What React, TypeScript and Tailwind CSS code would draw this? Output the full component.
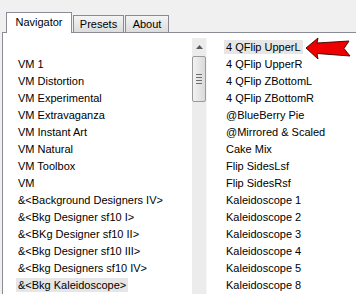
const leftItems = [
  'VM 1',
  'VM Distortion',
  'VM Experimental',
  'VM Extravaganza',
  'VM Instant Art',
  'VM Natural',
  'VM Toolbox',
  'VM',
  '&<Background Designers IV>',
  '&<Bkg Designer sf10 I>',
  '&<BKg Designer sf10 II>',
  '&<Bkg Designer sf10 III>',
  '&<Bkg Designers sf10 IV>',
  '&<Bkg Kaleidoscope>',
]

const rightItems = [
  '4 QFlip UpperL',
  '4 QFlip UpperR',
  '4 QFlip ZBottomL',
  '4 QFlip ZBottomR',
  '@BlueBerry Pie',
  '@Mirrored & Scaled',
  'Cake Mix',
  'Flip SidesLsf',
  'Flip SidesRsf',
  'Kaleidoscope 1',
  'Kaleidoscope 2',
  'Kaleidoscope 3',
  'Kaleidoscope 4',
  'Kaleidoscope 5',
  'Kaleidoscope 8',
]

function Row({ text, selected }: { text: string; selected?: boolean }) {
  return (
    <div className="h-[17px] leading-[17px] whitespace-nowrap">
      <span className={selected ? 'px-[2px] py-[1px] bg-[#e6e6e6]' : 'px-[2px]'}>{text}</span>
    </div>
  )
}

function RedArrow() {
  return (
    <svg className="absolute left-[304px] top-[37px]" width="48" height="23" viewBox="0 0 48 23">
      <polygon
        points="2,11 14,1 13,6 45,4 40,11.5 46,19 13,16.5 14,22"
        fill="#ee0000"
        stroke="#3a0000"
        strokeWidth="0.9"
        strokeLinejoin="round"
      />
    </svg>
  )
}

export default function App() {
  return (
    <div
      className="relative w-[356px] h-[294px] overflow-hidden bg-[#f0f0f0] text-[11px] text-black"
      style={{ fontFamily: '"Liberation Sans", Arial, sans-serif' }}
    >
      <div className="pt-[12px] pl-[2px] flex flex-col h-full">
        {/* tabs */}
        <div className="flex items-end pl-[4px] h-[20px]">
          <div className="relative z-10 -mb-px w-[66px] h-[21px] bg-white border border-b-0 border-[#898c95] flex items-center justify-center pb-[1px]">
            Navigator
          </div>
          <div className="w-[51px] h-[17px] ml-px border border-b-0 border-[#898c95] bg-gradient-to-b from-[#f4f4f4] to-[#dcdcdc] flex items-center justify-center">
            Presets
          </div>
          <div className="w-[44px] h-[17px] ml-px border border-b-0 border-[#898c95] bg-gradient-to-b from-[#f4f4f4] to-[#dcdcdc] flex items-center justify-center">
            About
          </div>
        </div>

        {/* panel */}
        <div className="flex-1 flex bg-white border-l border-t border-[#898c95]">
          <div className="w-[189px] pt-[23px] pl-[13px]">
            {leftItems.map((t, i) => (
              <Row key={i} text={t} selected={i === leftItems.length - 1} />
            ))}
          </div>

          <div className="w-[15px] mt-[5px] bg-[#ececec] border-r border-[#f7f7f7] flex flex-col items-center">
            <div className="h-[18px] w-full flex items-center justify-center">
              <svg width="7" height="4" viewBox="0 0 7 4">
                <polygon points="0,4 3.5,0 7,4" fill="#5a5a5a" />
              </svg>
            </div>
            <div className="w-[14px] h-[46px] border border-[#9a9a9a] rounded-[2px] bg-gradient-to-r from-[#f2f2f2] to-[#dadada] flex flex-col items-center justify-center gap-[2px]">
              <div className="w-[6px] h-px bg-[#6e6e6e]" />
              <div className="w-[6px] h-px bg-[#6e6e6e]" />
              <div className="w-[6px] h-px bg-[#6e6e6e]" />
              <div className="w-[6px] h-px bg-[#6e6e6e]" />
            </div>
          </div>

          <div className="pt-[6px] pl-[17px]">
            {rightItems.map((t, i) => (
              <Row key={i} text={t} selected={i === 0} />
            ))}
          </div>
        </div>
      </div>
      <RedArrow />
    </div>
  )
}
